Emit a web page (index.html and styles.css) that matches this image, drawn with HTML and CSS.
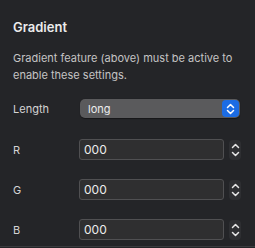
FILE: index.html
```html
<!DOCTYPE html>
<html lang="en">
<head>
    <meta charset="UTF-8">
    <title>Gradient</title>
    <link rel="stylesheet" href="styles.css">
</head>
<body>

<section class="panel">
    <h2 class="panel-title">Gradient</h2>
    <p class="panel-note">Gradient feature (above) must be active to enable these settings.</p>

    <div class="row row-select">
        <label class="row-label">Length</label>
        <div class="select">
            <span class="select-value">long</span>
            <span class="select-btn">
                <svg width="9" height="12" viewBox="0 0 9 12"><path d="M1.5 4.5 L4.5 1.5 L7.5 4.5 M1.5 7.5 L4.5 10.5 L7.5 7.5" fill="none" stroke="#fff" stroke-width="1.5" stroke-linecap="round" stroke-linejoin="round"/></svg>
            </span>
        </div>
    </div>

    <div class="row">
        <label class="row-label">R</label>
        <input class="num" type="text" value="000">
        <span class="stepper">
            <svg width="9" height="16" viewBox="0 0 9 16"><path d="M1.5 5.5 L4.5 2.5 L7.5 5.5 M1.5 10.5 L4.5 13.5 L7.5 10.5" fill="none" stroke="#e6e6e6" stroke-width="1.5" stroke-linecap="round" stroke-linejoin="round"/></svg>
        </span>
    </div>

    <div class="row">
        <label class="row-label">G</label>
        <input class="num" type="text" value="000">
        <span class="stepper">
            <svg width="9" height="16" viewBox="0 0 9 16"><path d="M1.5 5.5 L4.5 2.5 L7.5 5.5 M1.5 10.5 L4.5 13.5 L7.5 10.5" fill="none" stroke="#e6e6e6" stroke-width="1.5" stroke-linecap="round" stroke-linejoin="round"/></svg>
        </span>
    </div>

    <div class="row">
        <label class="row-label">B</label>
        <input class="num" type="text" value="000">
        <span class="stepper">
            <svg width="9" height="16" viewBox="0 0 9 16"><path d="M1.5 5.5 L4.5 2.5 L7.5 5.5 M1.5 10.5 L4.5 13.5 L7.5 10.5" fill="none" stroke="#e6e6e6" stroke-width="1.5" stroke-linecap="round" stroke-linejoin="round"/></svg>
        </span>
    </div>
</section>

</body>
</html>
```

FILE: styles.css
```css
html, body {
    margin: 0;
    padding: 0;
    background-color: #242528;
    height: 100%;
    overflow: hidden;
}
body {
    font-family: Inter, "Noto Sans", sans-serif;
    color: #d8d8d8;
}
.panel {
    padding: 19px 0 0 13px;
    height: 227px;
    border-bottom: 1px solid #3a3b3e;
}
.panel-title {
    margin: 0;
    font-size: 13px;
    font-weight: 600;
    line-height: 16px;
    color: #ececec;
}
.panel-note {
    margin: 15px 0 0 0;
    font-size: 11px;
    line-height: 17px;
    color: #c4c4c4;
    width: 230px;
}
.row {
    display: flex;
    align-items: center;
    height: 21px;
    margin-top: 19px;
}
.row-select {
    margin-top: 15px;
    height: 19px;
}
.row-select + .row {
    margin-top: 21px;
}
.row-label {
    width: 66px;
    font-size: 11px;
    color: #d4d4d4;
}
.select {
    display: flex;
    align-items: center;
    justify-content: space-between;
    width: 160px;
    height: 19px;
    margin-left: 1px;
    background-color: #5a5a5c;
    border-radius: 5px;
    box-shadow: 0 0.5px 1px rgba(0, 0, 0, 0.4);
}
.select-value {
    padding-left: 8px;
    font-size: 11px;
    color: #ececec;
}
.select-btn {
    display: flex;
    align-items: center;
    justify-content: center;
    width: 17px;
    height: 17px;
    margin-right: 1px;
    background-color: #1c6ce4;
    border-radius: 4px;
}
.num {
    box-sizing: border-box;
    width: 145px;
    height: 21px;
    margin: 0;
    padding: 0 0 0 4px;
    font-family: Inter, "Noto Sans", sans-serif;
    font-size: 12px;
    color: #ececec;
    background-color: #2f2f30;
    border: 1px solid #505052;
    border-radius: 3px;
    outline: none;
}
.stepper {
    display: flex;
    align-items: center;
    justify-content: center;
    width: 12px;
    height: 20px;
    margin-left: 5px;
    background-color: #2e2f32;
    border-radius: 4px;
}
```
